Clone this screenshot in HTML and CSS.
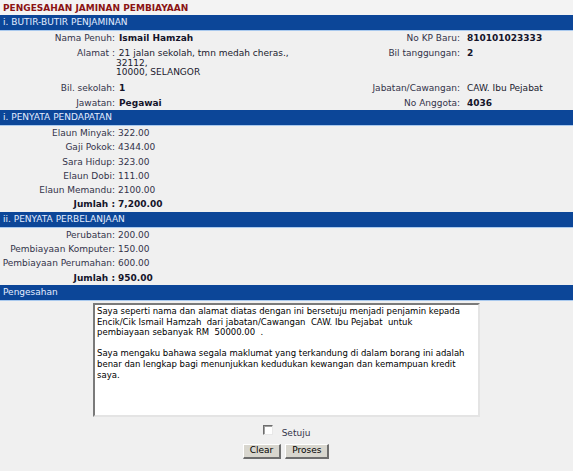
FILE: index.html
```html
<!DOCTYPE html>
<html>
<head>
<meta charset="utf-8">
<link rel="stylesheet" href="styles.css">
</head>
<body>
<div class="page">
  <div class="title">PENGESAHAN JAMINAN PEMBIAYAAN</div>

  <div class="bar">i. BUTIR-BUTIR PENJAMINAN</div>
  <div class="grid4">
    <div class="lbl">Nama Penuh:</div>
    <div class="val b">Ismail Hamzah</div>
    <div class="lbl r">No KP Baru:</div>
    <div class="val v4 b">810101023333</div>

    <div class="lbl">Alamat :</div>
    <div class="val addr">&nbsp;21 jalan sekolah, tmn medah cheras.,<br>32112,<br>10000, SELANGOR</div>
    <div class="lbl r">Bil tanggungan:</div>
    <div class="val v4 b">2</div>

    <div class="lbl">Bil. sekolah:</div>
    <div class="val b">1</div>
    <div class="lbl r">Jabatan/Cawangan:</div>
    <div class="val v4">CAW. Ibu Pejabat</div>

    <div class="lbl">Jawatan:</div>
    <div class="val b">Pegawai</div>
    <div class="lbl r">No Anggota:</div>
    <div class="val v4 b">4036</div>
  </div>

  <div class="bar">i. PENYATA PENDAPATAN</div>
  <div class="grid2">
    <div class="lbl">Elaun Minyak:</div><div class="val2">322.00</div>
    <div class="lbl">Gaji Pokok:</div><div class="val2">4344.00</div>
    <div class="lbl">Sara Hidup:</div><div class="val2">323.00</div>
    <div class="lbl">Elaun Dobi:</div><div class="val2">111.00</div>
    <div class="lbl">Elaun Memandu:</div><div class="val2">2100.00</div>
    <div class="lbl b">Jumlah :</div><div class="val2 b">7,200.00</div>
  </div>

  <div class="bar">ii. PENYATA PERBELANJAAN</div>
  <div class="grid2">
    <div class="lbl">Perubatan:</div><div class="val2">200.00</div>
    <div class="lbl">Pembiayaan Komputer:</div><div class="val2">150.00</div>
    <div class="lbl">Pembiayaan Perumahan:</div><div class="val2">600.00</div>
    <div class="lbl b">Jumlah :</div><div class="val2 b">950.00</div>
  </div>

  <div class="bar">Pengesahan</div>
  <div class="confirm">
    <textarea class="note" readonly>Saya seperti nama dan alamat diatas dengan ini bersetuju menjadi penjamin kepada
Encik/Cik Ismail Hamzah  dari jabatan/Cawangan  CAW. Ibu Pejabat  untuk
pembiayaan sebanyak RM  50000.00  .

Saya mengaku bahawa segala maklumat yang terkandung di dalam borang ini adalah
benar dan lengkap bagi menunjukkan kedudukan kewangan dan kemampuan kredit
saya.</textarea>
  </div>
  <div class="agree">
    <input type="checkbox" class="check">
    <span class="agree-text">Setuju</span>
  </div>
  <div class="actions">
    <button class="btn">Clear</button>
    <button class="btn">Proses</button>
  </div>
</div>
</body>
</html>
```

FILE: styles.css
```css
html, body {
  margin: 0;
  padding: 0;
  background: #ffffff;
}

body {
  font-family: "DejaVu Sans", Verdana, sans-serif;
  font-size: 9px;
  color: #33334a;
}

.page {
  width: 573px;
  background: #f0f0f0;
  padding-bottom: 12px;
}

.title {
  height: 15px;
  line-height: 16px;
  padding-left: 3px;
  font-weight: bold;
  color: #8b1414;
  background: #f3f3f3;
}

.bar {
  height: 15px;
  line-height: 15px;
  padding-left: 3px;
  background: #0c4698;
  color: #e4edff;
  border-bottom: 1px solid #a9c9ee;
}

.grid4 {
  display: grid;
  grid-template-columns: 116px 1fr 126px 113px;
  grid-template-rows: 15px 35px 14.5px 14.5px;
  align-items: start;
}

.grid2 {
  display: grid;
  grid-template-columns: 116px 1fr;
  grid-auto-rows: 14.3px;
  align-items: start;
}

.lbl {
  text-align: right;
  line-height: 14.5px;
  padding-right: 1px;
  white-space: nowrap;
}

.lbl.r {
  padding-right: 0;
}

.val {
  line-height: 14.5px;
  padding-left: 3px;
  white-space: nowrap;
  color: #1a1a2e;
}

.val.v4 {
  padding-left: 7px;
}

.val2 {
  line-height: 14.3px;
  padding-left: 2px;
  white-space: nowrap;
}

.grid2 .lbl {
  line-height: 14.3px;
}

.addr {
  line-height: 9.5px;
  padding-top: 3px;
  padding-left: 0;
}

.b {
  font-weight: bold;
  color: #14142a;
}

.confirm {
  padding: 2px 0 0 93px;
  height: 114px;
}

.note {
  display: block;
  box-sizing: border-box;
  width: 387px;
  height: 114px;
  margin: 0;
  padding: 1px 2px;
  resize: none;
  font-family: "DejaVu Sans", Tahoma, sans-serif;
  font-size: 8.5px;
  line-height: 10.6px;
  color: #000000;
  background: #ffffff;
  border-style: solid;
  border-width: 2px;
  border-color: #7a7a7a #e4e4e4 #e4e4e4 #7a7a7a;
  white-space: pre;
  overflow: hidden;
  outline: none;
}

.agree {
  display: flex;
  justify-content: center;
  align-items: center;
  gap: 9px;
  margin-top: 8px;
  height: 14px;
}

.check {
  appearance: none;
  -webkit-appearance: none;
  box-sizing: border-box;
  width: 10px;
  height: 10px;
  margin: 0 0 3px 0;
  background: #ffffff;
  border-style: solid;
  border-width: 1px;
  border-color: #6e6e6e #e8e8e8 #e8e8e8 #6e6e6e;
  box-shadow: inset 1px 1px 0 #a0a0a0;
}

.agree-text {
  color: #33334a;
  line-height: 14px;
  padding-top: 2px;
}

.actions {
  display: flex;
  justify-content: center;
  gap: 4px;
  margin-top: 5px;
  padding-right: 1px;
}

.btn {
  box-sizing: border-box;
  height: 15px;
  padding: 0 6px;
  margin: 0;
  font-family: "DejaVu Sans", Verdana, sans-serif;
  font-size: 9px;
  line-height: 11px;
  color: #000000;
  background: #d8d6ce;
  border-style: solid;
  border-width: 1px 2px 2px 1px;
  border-color: #ffffff #6e6e6e #6e6e6e #ffffff;
  border-radius: 0;
}
```
